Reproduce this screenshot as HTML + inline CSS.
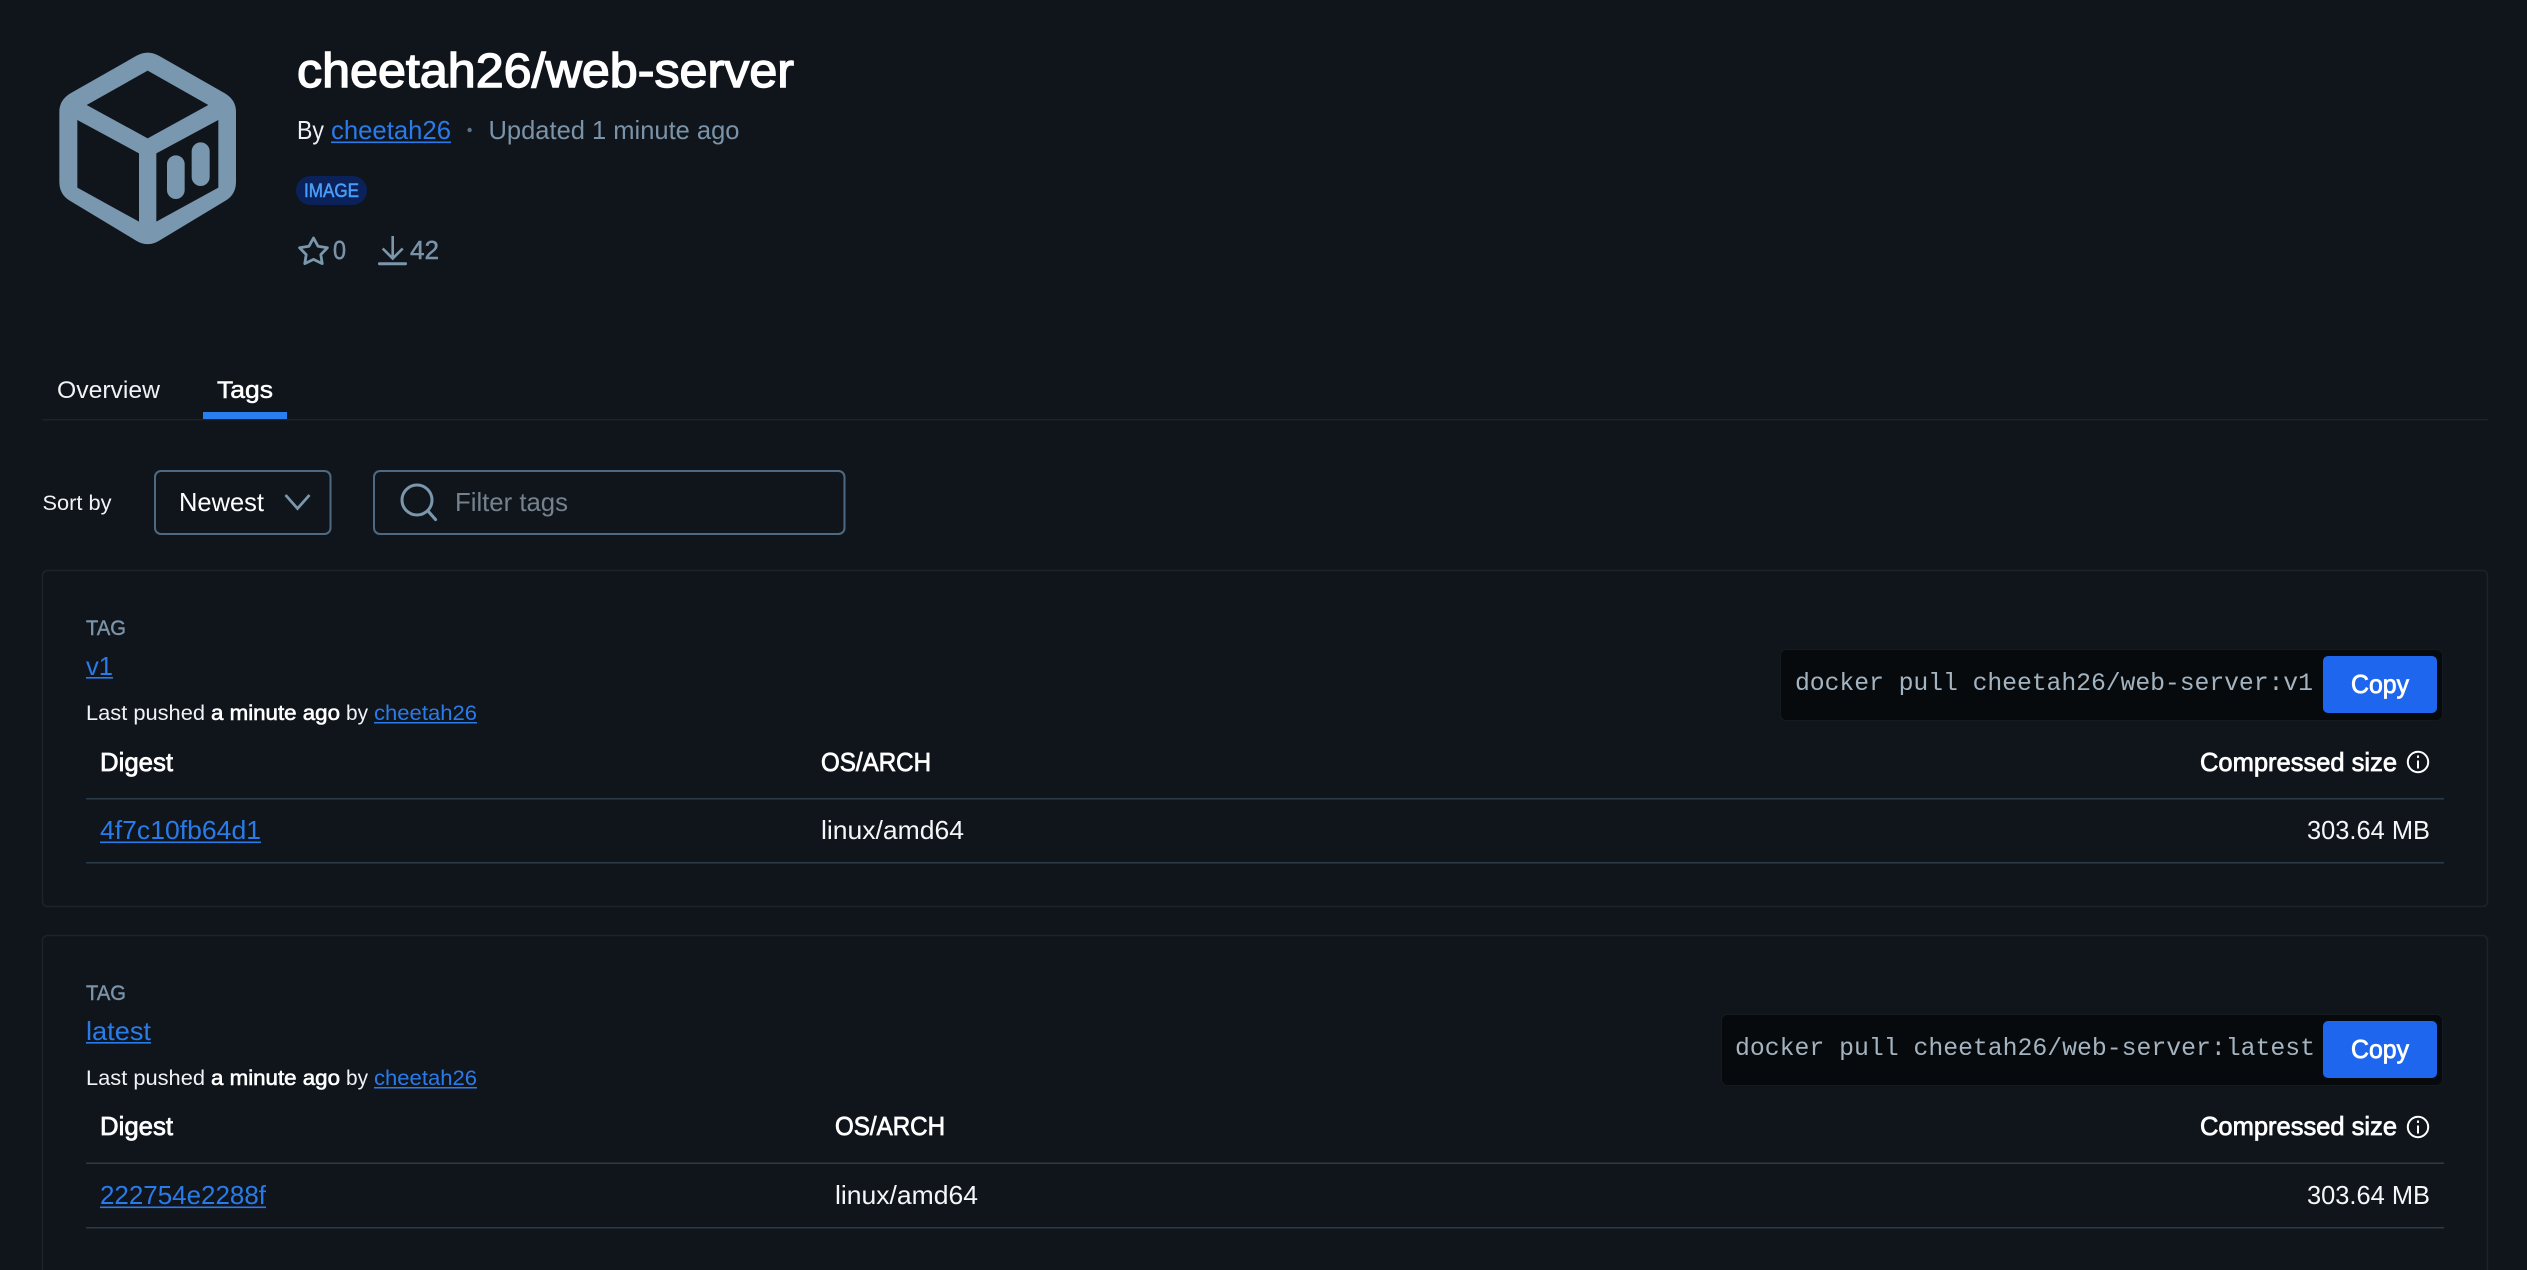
<!DOCTYPE html>
<html lang="en"><head><meta charset="utf-8"><title>cheetah26/web-server</title>
<style>
html,body{margin:0;padding:0;background:#10151c;width:2527px;height:1270px;overflow:hidden}
svg{display:block}
text{font-family:"Liberation Sans",sans-serif;white-space:pre}
.m{font-family:"Liberation Mono",monospace}
.w{fill:#fff}.l{fill:#2a7bea}.g{fill:#7b93a8}
.b{fill:#fff;stroke:#fff;stroke-width:.75px}
</style></head><body>
<svg width="2527" height="1270" viewBox="0 0 2527 1270" xmlns="http://www.w3.org/2000/svg">
<rect width="2527" height="1270" fill="#10151c"/>
<!-- logo -->
<g transform="translate(40 40) scale(.33333)" fill="#7a97b0">
<path fill-rule="evenodd" d="M290 47Q323 29 356 47L555 160Q588 180 588 215V425Q588 465 555 483L356 603Q323 622 290 603L91 483Q58 465 58 425V215Q58 180 91 160ZM323 92L140 195L323 295L505 195ZM112 240V443L297 545V340ZM535 240L349 340V545L535 443Z"/>
<rect x="381" y="346" width="53" height="131" rx="26.5"/>
<rect x="455" y="307" width="54" height="131" rx="27"/>
</g>
<!-- header -->
<text class="b" style="stroke-width:1.4px" x="297" y="87" font-size="48" textLength="497" lengthAdjust="spacingAndGlyphs">cheetah26/web-server</text>
<text fill="#eef1f4" x="297" y="139" font-size="25.6" textLength="27" lengthAdjust="spacingAndGlyphs">By</text>
<text class="l" x="331" y="139" font-size="25.6" textLength="120" lengthAdjust="spacingAndGlyphs">cheetah26</text>
<rect x="331" y="141.5" width="120" height="1.6" fill="#2a7bea"/>
<circle cx="469.6" cy="130" r="2.2" fill="#5d7387"/>
<text class="g" x="488.5" y="139" font-size="25.6" textLength="251" lengthAdjust="spacingAndGlyphs">Updated 1 minute ago</text>
<rect x="296" y="176" width="71" height="29" rx="14.5" fill="#0a2259"/>
<text fill="#4a9cf8" stroke="#4a9cf8" stroke-width=".55" x="304" y="197" font-size="19.2" textLength="55" lengthAdjust="spacingAndGlyphs">IMAGE</text>
<path d="M313.5 238L318 246.2L327.4 247.8L320.8 254.6L322.2 263.6L313.5 259.4L304.8 263.6L306.2 254.6L299.6 247.8L309 246.2Z" fill="none" stroke="#7a97ac" stroke-width="2.8" stroke-linejoin="round"/>
<text class="g" stroke="#7b93a8" stroke-width=".5" x="333" y="259" font-size="25.6" textLength="13" lengthAdjust="spacingAndGlyphs">0</text>
<path d="M392.7 236V258.5M382.7 248.5L392.7 258.5L402.7 248.5" fill="none" stroke="#7a97ac" stroke-width="2.6"/>
<rect x="378" y="262.2" width="29" height="3" rx="1.2" fill="#7a97ac"/>
<text class="g" stroke="#7b93a8" stroke-width=".5" x="410" y="259" font-size="25.6" textLength="29" lengthAdjust="spacingAndGlyphs">42</text>
<!-- tabs -->
<text fill="#f0f3f5" x="57" y="398" font-size="24" textLength="103" lengthAdjust="spacingAndGlyphs">Overview</text>
<text class="w" stroke="#fff" stroke-width=".5" x="217" y="398" font-size="24" textLength="56" lengthAdjust="spacingAndGlyphs">Tags</text>
<rect x="42" y="419" width="2446" height="1.4" fill="#1c232b"/>
<rect x="203" y="412" width="84" height="7" fill="#2a7ef0"/>
<!-- filters -->
<text fill="#f0f3f5" x="42.5" y="510" font-size="20.8" textLength="69" lengthAdjust="spacingAndGlyphs">Sort by</text>
<rect x="155" y="471" width="175.5" height="63" rx="6" fill="none" stroke="#4d6a82" stroke-width="2"/>
<text class="w" x="179" y="511" font-size="25.6" textLength="85" lengthAdjust="spacingAndGlyphs">Newest</text>
<path d="M285.5 495L297.5 508.5L309.5 495" fill="none" stroke="#7a97ac" stroke-width="2.8"/>
<rect x="374" y="471" width="470.5" height="63" rx="6" fill="none" stroke="#4d6a82" stroke-width="2"/>
<circle cx="417" cy="500" r="15" fill="none" stroke="#7a97ac" stroke-width="3"/>
<path d="M428 511L435.5 519.5" fill="none" stroke="#7a97ac" stroke-width="3.2" stroke-linecap="round"/>
<text fill="#75828d" x="455" y="511" font-size="25.6" textLength="113" lengthAdjust="spacingAndGlyphs">Filter tags</text>
<!-- card 1 -->
<rect x="42.5" y="570.5" width="2445" height="336" rx="5" fill="none" stroke="#1b232b" stroke-width="1.5"/>
<text class="g" stroke="#7b93a8" stroke-width=".4" x="86" y="635" font-size="20.8" textLength="40" lengthAdjust="spacingAndGlyphs">TAG</text>
<text class="l" x="86" y="675" font-size="25.6" textLength="27" lengthAdjust="spacingAndGlyphs">v1</text>
<rect x="86" y="677" width="27" height="1.6" fill="#2a7bea"/>
<text fill="#f0f3f5" x="86" y="720" font-size="20.8" textLength="119" lengthAdjust="spacingAndGlyphs">Last pushed</text>
<text class="b" style="stroke-width:.6px" x="211" y="720" font-size="20.8" textLength="129" lengthAdjust="spacingAndGlyphs">a minute ago</text>
<text fill="#f0f3f5" x="346" y="720" font-size="20.8" textLength="22" lengthAdjust="spacingAndGlyphs">by</text>
<text class="l" x="374" y="720" font-size="20.8" textLength="103" lengthAdjust="spacingAndGlyphs">cheetah26</text>
<rect x="374" y="722" width="103" height="1.5" fill="#2a7bea"/>
<rect x="1780.5" y="649.5" width="662" height="71" rx="6" fill="#070a0d" stroke="#141b20"/>
<text class="m" fill="#a3b3bf" x="1795" y="690" font-size="24.8" textLength="518">docker pull cheetah26/web-server:v1</text>
<rect x="2323" y="656" width="114" height="57" rx="5" fill="#1f66ee"/>
<text class="b" x="2351" y="693" font-size="25.6" textLength="58" lengthAdjust="spacingAndGlyphs">Copy</text>
<text class="b" x="100" y="771" font-size="25.6" textLength="73" lengthAdjust="spacingAndGlyphs">Digest</text>
<text class="b" x="821" y="771" font-size="25.6" textLength="110" lengthAdjust="spacingAndGlyphs">OS/ARCH</text>
<text class="b" x="2200" y="771" font-size="25.6" textLength="197" lengthAdjust="spacingAndGlyphs">Compressed size</text>
<circle cx="2418" cy="762" r="10.2" fill="none" stroke="#fff" stroke-width="2"/>
<rect x="2417" y="760.5" width="2" height="8" fill="#fff"/><rect x="2417" y="755.5" width="2" height="2.4" fill="#fff"/>
<rect x="86" y="798" width="2358" height="1.5" fill="#2b3a47"/>
<text class="l" x="100" y="839" font-size="25.6" textLength="161" lengthAdjust="spacingAndGlyphs">4f7c10fb64d1</text>
<rect x="100" y="841.5" width="161" height="1.6" fill="#2a7bea"/>
<text fill="#f4f6f8" x="821" y="839" font-size="25.6" textLength="143" lengthAdjust="spacingAndGlyphs">linux/amd64</text>
<text fill="#f4f6f8" x="2307" y="839" font-size="25.6" textLength="123" lengthAdjust="spacingAndGlyphs">303.64 MB</text>
<rect x="86" y="862" width="2358" height="1.5" fill="#2b3a47"/>
<!-- card 2 -->
<path d="M42.5 1270V940.5a5 5 0 0 1 5-5H2482.5a5 5 0 0 1 5 5V1270" fill="none" stroke="#1b232b" stroke-width="1.5"/>
<text class="g" stroke="#7b93a8" stroke-width=".4" x="86" y="1000" font-size="20.8" textLength="40" lengthAdjust="spacingAndGlyphs">TAG</text>
<text class="l" x="86" y="1040" font-size="25.6" textLength="65" lengthAdjust="spacingAndGlyphs">latest</text>
<rect x="86" y="1042" width="65" height="1.6" fill="#2a7bea"/>
<text fill="#f0f3f5" x="86" y="1085" font-size="20.8" textLength="119" lengthAdjust="spacingAndGlyphs">Last pushed</text>
<text class="b" style="stroke-width:.6px" x="211" y="1085" font-size="20.8" textLength="129" lengthAdjust="spacingAndGlyphs">a minute ago</text>
<text fill="#f0f3f5" x="346" y="1085" font-size="20.8" textLength="22" lengthAdjust="spacingAndGlyphs">by</text>
<text class="l" x="374" y="1085" font-size="20.8" textLength="103" lengthAdjust="spacingAndGlyphs">cheetah26</text>
<rect x="374" y="1087" width="103" height="1.5" fill="#2a7bea"/>
<rect x="1721.5" y="1014.5" width="721" height="71" rx="6" fill="#070a0d" stroke="#141b20"/>
<text class="m" fill="#a3b3bf" x="1735" y="1055" font-size="24.8" textLength="580">docker pull cheetah26/web-server:latest</text>
<rect x="2323" y="1021" width="114" height="57" rx="5" fill="#1f66ee"/>
<text class="b" x="2351" y="1058" font-size="25.6" textLength="58" lengthAdjust="spacingAndGlyphs">Copy</text>
<text class="b" x="100" y="1135" font-size="25.6" textLength="73" lengthAdjust="spacingAndGlyphs">Digest</text>
<text class="b" x="835" y="1135" font-size="25.6" textLength="110" lengthAdjust="spacingAndGlyphs">OS/ARCH</text>
<text class="b" x="2200" y="1135" font-size="25.6" textLength="197" lengthAdjust="spacingAndGlyphs">Compressed size</text>
<circle cx="2418" cy="1127" r="10.2" fill="none" stroke="#fff" stroke-width="2"/>
<rect x="2417" y="1125.5" width="2" height="8" fill="#fff"/><rect x="2417" y="1120.5" width="2" height="2.4" fill="#fff"/>
<rect x="86" y="1162.5" width="2358" height="1.5" fill="#2b3a47"/>
<text class="l" x="100" y="1204" font-size="25.6" textLength="166" lengthAdjust="spacingAndGlyphs">222754e2288f</text>
<rect x="100" y="1206.5" width="166" height="1.6" fill="#2a7bea"/>
<text fill="#f4f6f8" x="835" y="1204" font-size="25.6" textLength="143" lengthAdjust="spacingAndGlyphs">linux/amd64</text>
<text fill="#f4f6f8" x="2307" y="1204" font-size="25.6" textLength="123" lengthAdjust="spacingAndGlyphs">303.64 MB</text>
<rect x="86" y="1227" width="2358" height="1.5" fill="#2b3a47"/>
</svg>
</body></html>
